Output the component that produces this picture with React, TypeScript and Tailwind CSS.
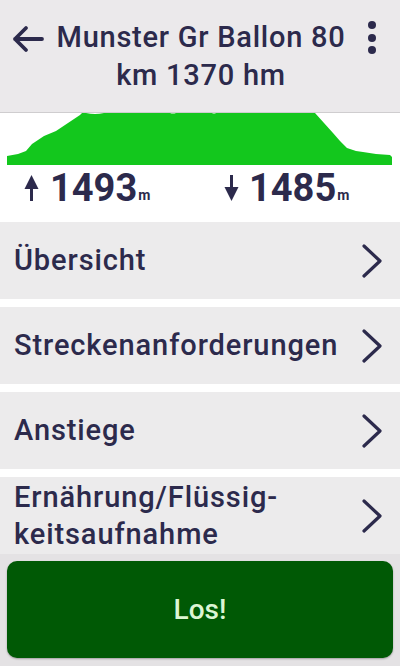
import React from "react";

const ink = "#2c2a4c";

function Chevron() {
  return (
    <svg width="22" height="34" viewBox="0 0 22 34" fill="none" aria-hidden>
      <path d="M3 2 L19 17 L3 32" stroke={ink} strokeWidth="3.2" strokeLinecap="round" strokeLinejoin="round" />
    </svg>
  );
}

function Row({ children }: { children: React.ReactNode }) {
  return (
    <div className="flex h-[77px] items-center justify-between bg-[#ecebec] pl-[14px] pr-[17px]">
      <span className="text-[29px] leading-[37px] font-medium tracking-[0.9px] text-[#2c2a4c]">{children}</span>
      <Chevron />
    </div>
  );
}

export default function App() {
  return (
    <div
      className="flex h-[666px] w-[400px] flex-col overflow-hidden bg-white text-[#2c2a4c]"
      style={{ fontFamily: "Roboto, 'Noto Sans', sans-serif" }}
    >
      {/* header */}
      <header className="relative flex h-[113px] shrink-0 justify-center border-b border-[#cfcdcf] bg-[#ebe9eb] pt-[18px]">
        <svg className="absolute left-[11px] top-[25px]" width="34" height="28" viewBox="0 0 34 28" fill="none" aria-hidden>
          <path d="M4 14 H31 M15 3 L4 14 L15 25" stroke={ink} strokeWidth="3.8" strokeLinecap="round" strokeLinejoin="round" />
        </svg>
        <h1 className="pl-[2px] text-center text-[29px] leading-[38px] font-medium tracking-[0.75px]">
          Munster Gr Ballon 80
          <br />
          km 1370 hm
        </h1>
        <div className="absolute right-[24px] top-[21px] flex flex-col items-center gap-[4.5px]">
          <span className="h-[8px] w-[8px] rounded-full bg-[#2c2a4c]" />
          <span className="h-[8px] w-[8px] rounded-full bg-[#2c2a4c]" />
          <span className="h-[8px] w-[8px] rounded-full bg-[#2c2a4c]" />
        </div>
      </header>

      {/* elevation profile */}
      <svg className="block shrink-0" width="400" height="52" viewBox="0 0 400 52" aria-hidden>
        <path
          d="M7 52 L7 43 L18 41 L26 38 L32 31 L44 23 L56 18 L68 10 L80 2 L82 0 L315 0 L324 10 L333 20 L340 28 L347 35 L356 38 L363 39 L376 41 L390 42 L392 44 L392 52 Z"
          fill="#13c71d"
        />
        <path d="M86 0 Q95 2 104 0 Z M170 0 Q173 1 176 0 Z M212 0 Q214 1 216 0 Z" fill="#ffffff" />
      </svg>

      {/* totals */}
      <div className="flex h-[57px] shrink-0 items-start bg-white pt-[1px]">
        <div className="flex w-[200px] items-end pl-[24px]">
          <svg className="mr-[11px] mb-[9px]" width="15" height="26" viewBox="0 0 15 26" aria-hidden>
            <path d="M7.5 0 L14.5 14 L0.5 14 Z" fill={ink} />
            <rect x="6" y="12" width="3" height="14" fill={ink} />
          </svg>
          <span className="text-[38px] leading-[44px] font-bold">1493</span>
          <span className="ml-[1px] mb-[7px] text-[14px] leading-[16px] font-bold">m</span>
        </div>
        <div className="flex items-end pl-[24px]">
          <svg className="mr-[10px] mb-[9px]" width="15" height="26" viewBox="0 0 15 26" aria-hidden>
            <path d="M7.5 26 L14.5 12 L0.5 12 Z" fill={ink} />
            <rect x="6" y="0" width="3" height="14" fill={ink} />
          </svg>
          <span className="text-[38px] leading-[44px] font-bold">1485</span>
          <span className="ml-[1px] mb-[7px] text-[14px] leading-[16px] font-bold">m</span>
        </div>
      </div>

      {/* menu */}
      <nav className="flex shrink-0 flex-col gap-[8px]">
        <Row>Übersicht</Row>
        <Row>Streckenanforderungen</Row>
        <Row>Anstiege</Row>
        <Row>
          Ernährung/Flüssig-
          <br />
          keitsaufnahme
        </Row>
      </nav>

      <div className="flex flex-1 flex-col bg-[#e4e2e4] px-[7px] pt-[7px] pb-[8px]">
        <button className="flex flex-1 items-center justify-center rounded-[10px] bg-[#005905] text-[28px] font-medium text-[#dcf5d4] shadow-[0_1px_2px_rgba(0,0,0,0.3)]">
          Los!
        </button>
      </div>
    </div>
  );
}
